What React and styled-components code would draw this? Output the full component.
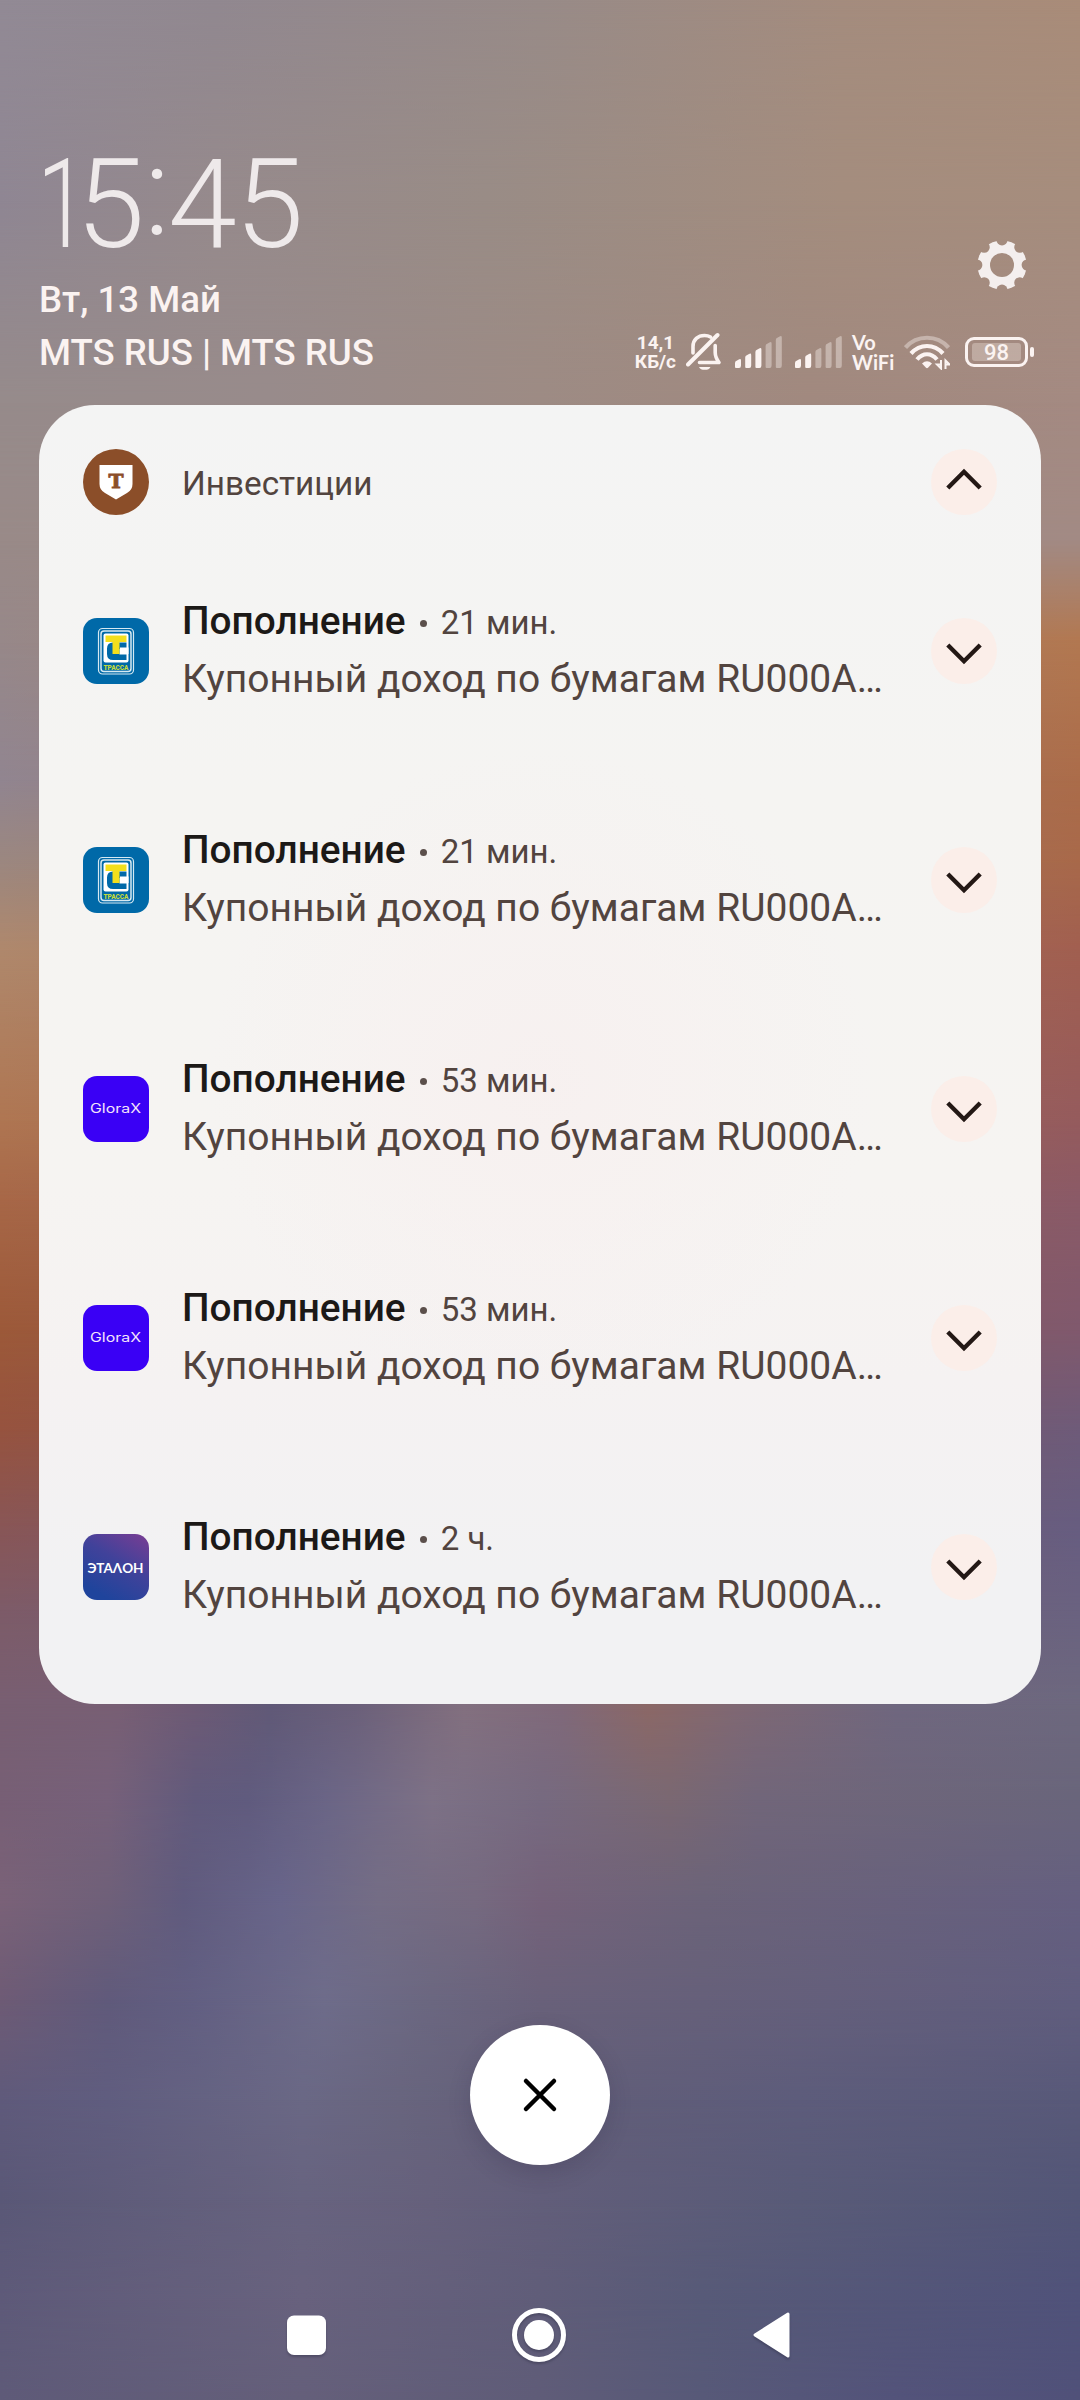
import React from 'react';
import styled, { createGlobalStyle } from 'styled-components';

const GlobalStyle = createGlobalStyle`
    * {
        box-sizing: border-box;
    }

    body {
        margin: 0;
        background: #5e5a78;
        font-family: Roboto, "Noto Sans", sans-serif;
    }
`;

// horizontal colour stops of the wallpaper, each one at its own height
const wallpaper = [
    { y: 0, colors: '#928a95, #918890 20%, #988b88 50%, #a48c7e 78%, #a98c79' },
    { y: 200, colors: '#8f8693, #968a8c 20%, #998c86 45%, #a48d7e 78%, #a68d7d' },
    { y: 400, colors: '#968b8b, #988b8b 25%, #9d8b84 50%, #a1897f 75%, #a48a82' },
    { y: 540, colors: '#998a88, #a28a84' },
    { y: 640, colors: '#978889, #b27851' },
    { y: 780, colors: '#918590, #ab6c4a' },
    { y: 860, colors: '#9b8780, #a8694a' },
    { y: 950, colors: '#af886c, #a15f50' },
    { y: 1120, colors: '#af7652, #955b5d' },
    { y: 1200, colors: '#a76747, #8a5a67' },
    { y: 1330, colors: '#9c5939, #80596d' },
    { y: 1430, colors: '#96533f, #6e5b79' },
    { y: 1530, colors: '#885657, #675d80' },
    { y: 1610, colors: '#7d5b68, #6a6280' },
    { y: 1704, colors: '#785f72, #785f74 11%, #6d5a75 18%, #605977 25%, #6b607a 33%, #83707f 43%, #80697a 52%, #8c6866 60%, #806873 68%, #6f677f 83%, #6d687e' },
    { y: 1800, colors: '#775f75, #76617a 10%, #615a7c 18%, #605b7e 23%, #6a6586 30%, #7d7186 40%, #766a80 50%, #7a6872 62%, #71667a 70%, #69657b' },
    { y: 1900, colors: '#7a6278, #6f6079 10%, #605b7e 17%, #68658a 26%, #746d85 35%, #766a80 44%, #75627a 50%, #6b6379 65%, #655f80' },
    { y: 2000, colors: '#6e5b75, #605a7b 10%, #625f82 18%, #6e6c8a 30%, #6b6780 40%, #69617a 50%, #66607a 65%, #605d7e' },
    { y: 2100, colors: '#5f5a7b, #605d7f 10%, #6a6885 28%, #68657e 37%, #625e78 50%, #5d5c7b 74%, #585979' },
    { y: 2200, colors: '#5a5877, #67637f 28%, #66617c 40%, #625e7a 50%, #595b78 74%, #535677' },
    { y: 2300, colors: '#5e5a79, #68627e 28%, #605d79 50%, #575a78 65%, #50527a' },
    { y: 2400, colors: '#5e5a78, #645f7a 28%, #5f5c78 50%, #575978 65%, #53537a 83%, #505179' },
];

const notifications = [
    { id: 1, logo: 'trassa', time: '21 мин.' },
    { id: 2, logo: 'trassa', time: '21 мин.' },
    { id: 3, logo: 'glorax', time: '53 мин.' },
    { id: 4, logo: 'glorax', time: '53 мин.' },
    { id: 5, logo: 'etalon', time: '2 ч.' },
];

const Screen = styled.div`
    display: grid;
    width: 1080px;
    height: 2400px;
    overflow: hidden;
`;

const Wallpaper = styled.div`
    grid-area: 1 / 1;
    display: grid;
    grid-template-columns: 1fr;
    grid-template-rows: ${wallpaper.slice(1).map((band, i) => `${band.y - wallpaper[i].y}px`).join(' ')};
`;

const Band = styled.div`
    grid-column: 1;
    grid-row: ${({ $index }) => ($index === 0 ? '1 / 2' : `${$index} / ${Math.min($index + 2, wallpaper.length)}`)};
    background: linear-gradient(to right, ${({ $colors }) => $colors});
    mask-image: ${({ $fade }) => ($fade ? `linear-gradient(to bottom, transparent, #000 ${$fade}px)` : 'none')};
`;

const Shade = styled.div`
    grid-area: 1 / 1;
    z-index: 1;
    display: flex;
    flex-direction: column;
`;

const Header = styled.header`
    display: flex;
    justify-content: space-between;
    align-items: flex-end;
    height: 405px;
    padding: 0 46px 26px 39px;
    color: #fbf3f1;
`;

const Clock = styled.div`
    display: flex;
    height: 130px;
    margin-left: -2px;
    font-size: 124px;
    font-weight: 300;
    line-height: 124px;
    color: #eee9ea;
`;

const Digit = styled.span`
    width: ${({ $width }) => $width}px;
`;

const NarrowOne = styled(Digit)`
    transform: scaleX(0.74);
    transform-origin: left;
`;

const Colon = styled.span`
    width: 27px;
    padding-left: 3px;
    line-height: 98px;
`;

const HeaderLine = styled.div`
    font-size: 36.6px;
    font-weight: 500;
    line-height: 53px;
    white-space: nowrap;
`;

const HeaderSide = styled.div`
    display: flex;
    flex-direction: column;
    align-items: flex-end;
    gap: 41px;
`;

const SettingsButton = styled.div`
    display: flex;
    padding-right: 7px;
`;

const StatusBar = styled.div`
    display: flex;
    align-items: center;
    height: 42px;
    margin-bottom: 6px;
`;

const NetSpeed = styled.div`
    margin-right: 10px;
    font-size: 19px;
    font-weight: 700;
    line-height: 19px;
    text-align: center;
    white-space: nowrap;
`;

const VoWifi = styled.div`
    width: 44px;
    margin-right: 8px;
    font-family: Lato, sans-serif;
    font-size: 20px;
    font-weight: 700;
    line-height: 20px;
`;

const BatteryWrap = styled.div`
    display: flex;
    align-items: center;
    gap: 2px;
`;

const BatteryBody = styled.div`
    width: 63px;
    height: 30px;
    padding: 3px 4px;
    border: 3px solid #fbf3f1;
    border-radius: 9px;
`;

const BatteryLevel = styled.div`
    height: 18px;
    border-radius: 3px;
    background: rgba(255, 245, 240, 0.3);
    font-size: 22px;
    font-weight: 500;
    line-height: 19px;
    text-align: center;
`;

const BatteryCap = styled.div`
    width: 4px;
    height: 10px;
    border-radius: 2px;
    background: #fbf3f1;
`;

const Card = styled.section`
    height: 1299px;
    margin: 0 39px;
    padding: 44px 44px 0;
    border-radius: 56px;
    background:
        radial-gradient(circle 330px at 50% 52%, rgba(248, 238, 238, 0.6), transparent),
        linear-gradient(to bottom, #f4f4f4, #f5f4f2 30%, #f6f4f2 60%, #f5f2f2 75%, #f2f2f3 90%, #f2f2f3);
`;

const CardHeader = styled.div`
    display: flex;
    height: 87.5px;
    align-items: flex-start;
`;

const Row = styled.div`
    display: flex;
    align-items: center;
    height: 229px;
`;

const AppBadge = styled.div`
    display: flex;
    align-items: center;
    justify-content: center;
    flex: none;
    width: 66px;
    height: 66px;
    border-radius: 50%;
    background: #8b4e29;
`;

const Tile = styled.svg`
    flex: none;
    width: 66px;
    height: 66px;
    border-radius: 14px;
`;

const AppName = styled.div`
    flex: 1;
    padding-left: 33px;
    font-size: 33.3px;
    line-height: 70px;
    color: #52443f;
`;

const Message = styled.div`
    flex: 1;
    min-width: 0;
    padding: 0 0 3px 33px;
`;

const TitleLine = styled.div`
    display: flex;
    align-items: baseline;
    height: 58px;
    line-height: 58px;
`;

const Title = styled.span`
    font-size: 38.8px;
    font-weight: 500;
    color: #1c1917;
`;

const Dot = styled.span`
    align-self: center;
    width: 7px;
    height: 7px;
    margin: 5px 14px 0;
    border-radius: 50%;
    background: #5b4f4b;
`;

const Time = styled.span`
    font-size: 33px;
    color: #52443f;
`;

const Body = styled.div`
    font-size: 39px;
    line-height: 58px;
    white-space: nowrap;
    color: #52443f;
`;

const Toggle = styled.div`
    display: flex;
    align-items: center;
    justify-content: center;
    flex: none;
    width: 66px;
    height: 66px;
    border-radius: 50%;
    background: #fbeee9;

    svg {
        transform: ${({ $open }) => ($open ? 'translateY(-3px) rotate(180deg)' : 'translateY(3px)')};
    }
`;

const ClearButton = styled.div`
    display: flex;
    align-items: center;
    justify-content: center;
    align-self: center;
    width: 140px;
    height: 140px;
    margin-top: 321px;
    border-radius: 50%;
    background: #fff;
    box-shadow: 0 8px 22px rgba(40, 35, 60, 0.18);
`;

const NavBar = styled.nav`
    display: flex;
    justify-content: space-between;
    align-items: center;
    height: 60px;
    margin-top: 140px;
    padding: 0 290px 0 285px;

    svg {
        filter: drop-shadow(0 2px 1px rgba(30, 30, 50, 0.3));
    }
`;

const Gear = () => (
    <svg width="50" height="50" viewBox="-25 -25 50 50">
        <mask id="gear">
            <circle r="24.6" fill="#fff" />
            <circle r="12" fill="#000" />
            {[0, 45, 90, 135, 180, 225, 270, 315].map((angle) => (
                <circle key={angle} cx="25.2" r="5.6" fill="#000" transform={`rotate(${angle})`} />
            ))}
        </mask>
        <rect x="-25" y="-25" width="50" height="50" fill="#f4efee" mask="url(#gear)" />
    </svg>
);

const BellOff = () => (
    <svg width="36" height="40" viewBox="0 0 36 40" style={{ marginRight: 13 }} fill="none" stroke="#fbf3f1" strokeWidth="3.6" strokeLinecap="round" strokeLinejoin="round">
        <path d="M7 21V14.5C7 7.5 12 3.5 18.5 3.5Q22 3.5 24.5 5" />
        <path d="M29.2 13.5V20.5C29.2 24.5 30.5 27 33 30.5H13.5" />
        <path d="M2 32.5L31.5 3" strokeWidth="4" />
        <path d="M13 35h11.5a6 4 0 0 1 -11.5 0z" fill="#fbf3f1" stroke="none" />
    </svg>
);

const Signal = ({ level, gap }) => (
    <svg width="48" height="32" viewBox="0 0 48 32" style={{ marginRight: gap }} fill="#fbf3f1">
        {[8, 13.5, 19, 25, 31].map((h, i) => (
            <path
                key={h}
                d={`M${i * 10.2} ${31}v-${h - 4}q0 -1.600 1.600 -2.200l2.200 -1.400q2.200 -1 2.200 1v${h - 2.9}q0 2.500 -2 2.500h-3q-1 0 -1 -1z`}
                opacity={i < level ? 1 : 0.4}
            />
        ))}
    </svg>
);

const Wifi = () => (
    <svg width="46" height="36" viewBox="0 0 46 36" style={{ marginRight: 15 }} fill="none" stroke="#fbf3f1" strokeWidth="4.2">
        <path d="M1.5 13.5C13 .5 33 .5 44.5 13.5" opacity=".4" />
        <path d="M7 19.5C16 9.500 30 9.500 39 19.5" />
        <path d="M13 25.5C19 18.500 27 18.500 33 25.5" />
        <path d="M18 29.5Q23 25 28 29.5L24 33.8Q23 34.5 22 33.8z" fill="#fbf3f1" stroke="none" />
        <path d="M37 26v8.500l-4 -4h3M41.500 35v-8.500l4 4h-3" strokeWidth="2" />
    </svg>
);

const Chevron = () => (
    <svg width="36" height="24" viewBox="0 0 36 24" fill="none" stroke="#231815" strokeWidth="4.4">
        <path d="M1.8 3L18 19.2L34.2 3" />
    </svg>
);

const Logo = ({ name }) => {
    if (name === 'trassa') {
        return (
            <Tile viewBox="0 0 66 66">
                <rect width="66" height="66" fill="#0069a8" />
                <rect x="15.5" y="10.5" width="35" height="45.5" rx="4" fill="none" stroke="#d5e9f2" strokeWidth="1.2" />
                <rect x="18" y="13" width="30" height="40.5" rx="3" fill="none" stroke="#d5e9f2" strokeWidth="1.5" />
                <rect x="20.5" y="15.5" width="25" height="29" rx="2" fill="#fff" />
                <path d="M43.5 24.5H30Q24 24.5 24 30.5V36Q24 42 30 42H43.5V36.5H36.500V31H43.5z" fill="#0069a8" />
                <path d="M37 29.500H45.500V36H37z" fill="#fff" />
                <path d="M22.5 17.5H43.5V24H36.5V36H29.5V24H22.5z" fill="#f3df1c" />
                <text x="33" y="51.6" textAnchor="middle" fontFamily="Roboto" fontWeight="900" fontSize="7.6" textLength="25" lengthAdjust="spacingAndGlyphs" fill="#c6d93c">ТРАССА</text>
            </Tile>
        );
    }
    if (name === 'glorax') {
        return (
            <Tile viewBox="0 0 66 66">
                <rect width="66" height="66" fill="#3a00f5" />
                <text x="7" y="36.5" fontFamily="Inter" fontWeight="400" fontSize="12.5" textLength="51" lengthAdjust="spacingAndGlyphs" fill="#f4e4fb">GloraX</text>
            </Tile>
        );
    }
    return (
        <Tile viewBox="0 0 66 66">
            <defs>
                <linearGradient id="etalon" x1="1" y1="0" x2=".4" y2="1">
                    <stop offset="0" stopColor="#7a3d93" />
                    <stop offset=".5" stopColor="#41429a" />
                    <stop offset="1" stopColor="#1f449c" />
                </linearGradient>
            </defs>
            <rect width="66" height="66" fill="url(#etalon)" />
            <text x="4.5" y="38.7" fontFamily="Lato" fontWeight="700" fontSize="12.8" textLength="56" lengthAdjust="spacingAndGlyphs" fill="#fff">ЭТАΛОН</text>
        </Tile>
    );
};

const Notification = ({ logo, time }) => (
    <Row>
        <Logo name={logo} />
        <Message>
            <TitleLine>
                <Title>Пополнение</Title>
                <Dot />
                <Time>{time}</Time>
            </TitleLine>
            <Body>Купонный доход по бумагам RU000A…</Body>
        </Message>
        <Toggle><Chevron /></Toggle>
    </Row>
);

const App = () => {
    return (
        <Screen>
            <GlobalStyle />
            <Wallpaper>
                {wallpaper.map((band, i) => (
                    <Band
                        key={band.y}
                        $index={i}
                        $colors={band.colors}
                        $fade={i > 0 ? band.y - wallpaper[i - 1].y : 0}
                    />
                ))}
            </Wallpaper>
            <Shade>
                <Header>
                    <div>
                        <Clock>
                            <NarrowOne $width={39}>1</NarrowOne>
                            <Digit $width={65}>5</Digit>
                            <Colon>:</Colon>
                            <Digit $width={67}>4</Digit>
                            <Digit $width={65}>5</Digit>
                        </Clock>
                        <HeaderLine>Вт, 13 Май</HeaderLine>
                        <HeaderLine>MTS RUS | MTS RUS</HeaderLine>
                    </div>
                    <HeaderSide>
                        <SettingsButton><Gear /></SettingsButton>
                        <StatusBar>
                            <NetSpeed>14,1<br />КБ/с</NetSpeed>
                            <BellOff />
                            <Signal level={3} gap={12} />
                            <Signal level={2} gap={9} />
                            <VoWifi>Vo<br />WiFi</VoWifi>
                            <Wifi />
                            <BatteryWrap>
                                <BatteryBody>
                                    <BatteryLevel>98</BatteryLevel>
                                </BatteryBody>
                                <BatteryCap />
                            </BatteryWrap>
                        </StatusBar>
                    </HeaderSide>
                </Header>

                <Card>
                    <CardHeader>
                        <AppBadge>
                            <svg width="34" height="36" viewBox="0 0 34 36">
                                <path d="M.5 1H33.5V20Q33.5 26 28 29L17 35.5L6 29Q.5 26 .5 20z" fill="#fff" />
                                <text x="17" y="23.5" textAnchor="middle" fontFamily="'DejaVu Serif', 'Liberation Serif', serif" fontWeight="700" fontSize="18.5" textLength="15" lengthAdjust="spacingAndGlyphs" fill="#8b4e29" stroke="#8b4e29" strokeWidth=".8">T</text>
                            </svg>
                        </AppBadge>
                        <AppName>Инвестиции</AppName>
                        <Toggle $open><Chevron /></Toggle>
                    </CardHeader>
                    {notifications.map((item) => (
                        <Notification key={item.id} logo={item.logo} time={item.time} />
                    ))}
                </Card>

                <ClearButton>
                    <svg width="36" height="36" viewBox="0 0 36 36" stroke="#000" strokeWidth="4.5" strokeLinecap="round">
                        <path d="M4 4L32 32M32 4L4 32" />
                    </svg>
                </ClearButton>

                <NavBar>
                    <svg width="43" height="43" viewBox="0 0 43 43">
                        <rect x="2" y="1.5" width="39" height="39.5" rx="7" fill="#fff" />
                    </svg>
                    <svg width="56" height="56" viewBox="0 0 56 56">
                        <circle cx="28" cy="28" r="24.5" fill="none" stroke="#fff" strokeWidth="5" />
                        <circle cx="28" cy="28" r="15" fill="#fff" />
                    </svg>
                    <svg width="40" height="48" viewBox="0 0 40 48">
                        <path d="M5 24L38 3V45z" fill="#fff" stroke="#fff" strokeWidth="3" strokeLinejoin="round" />
                    </svg>
                </NavBar>
            </Shade>
        </Screen>
    );
};

export default App;
